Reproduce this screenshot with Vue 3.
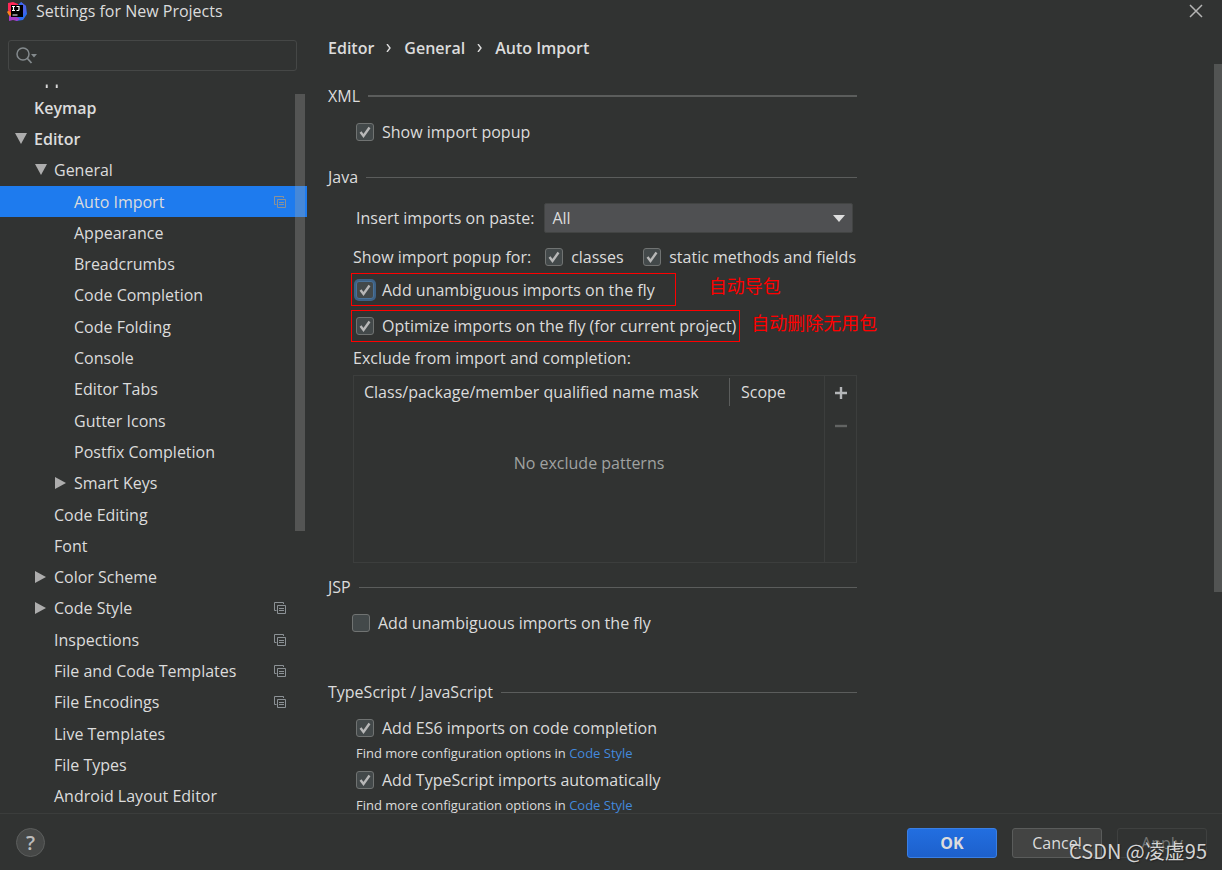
<script setup>
import { ref } from 'vue'

const tree = [
  { label: 'Keymap', level: 0, bold: true },
  { label: 'Editor', level: 0, bold: true, arrow: 'down' },
  { label: 'General', level: 1, arrow: 'down' },
  { label: 'Auto Import', level: 2, scoped: true },
  { label: 'Appearance', level: 2 },
  { label: 'Breadcrumbs', level: 2 },
  { label: 'Code Completion', level: 2 },
  { label: 'Code Folding', level: 2 },
  { label: 'Console', level: 2 },
  { label: 'Editor Tabs', level: 2 },
  { label: 'Gutter Icons', level: 2 },
  { label: 'Postfix Completion', level: 2 },
  { label: 'Smart Keys', level: 2, arrow: 'right' },
  { label: 'Code Editing', level: 1 },
  { label: 'Font', level: 1 },
  { label: 'Color Scheme', level: 1, arrow: 'right' },
  { label: 'Code Style', level: 1, arrow: 'right', scoped: true },
  { label: 'Inspections', level: 1, scoped: true },
  { label: 'File and Code Templates', level: 1, scoped: true },
  { label: 'File Encodings', level: 1, scoped: true },
  { label: 'Live Templates', level: 1 },
  { label: 'File Types', level: 1 },
  { label: 'Android Layout Editor', level: 1 }
]

const selected = ref('Auto Import')
const query = ref('')
const paste = ref('All')
const xmlPopup = ref(true)
const classes = ref(true)
const statics = ref(true)
const addOnFly = ref(true)
const optimize = ref(true)
const jspAdd = ref(false)
const es6 = ref(true)
const tsAuto = ref(true)
</script>

<template>
  <div class="window">
    <header class="titlebar">
      <svg class="logo" viewBox="0 0 20 20" aria-hidden="true">
        <path d="M0 11l3-3 3 6-3 2z" fill="#fc801d" />
        <path d="M1 2 6 1l5 2 1 3-6 8-5-5z" fill="#fe2857" />
        <path d="M11 4l3-3 5 4 1 8-4 6-7 1-2-5 6-3z" fill="#2b6cf0" />
        <path d="M2 15l4-1 7 4-3 2-4-1-4 1z" fill="#a83cc8" />
        <path d="M14 1l5 4v6l-4 4z" fill="#4b62e8" />
        <rect x="4" y="4" width="12" height="12" fill="#000" />
        <path d="M5 5.500h3M6.500 5.500v4M5 9.500h3M9.500 5.500H12v3q0 1-1 1H9.500M5.500 14h5" fill="none" stroke="#fff" stroke-width="1.200" />
      </svg>
      <span class="title">Settings for New Projects</span>
      <button class="close" aria-label="Close">
        <svg viewBox="0 0 14 14"><path d="M1 1l12 12M13 1L1 13" /></svg>
      </button>
    </header>

    <div class="body">
      <aside class="sidebar">
        <label class="search">
          <svg viewBox="0 0 22 18" aria-hidden="true">
            <circle cx="7" cy="7" r="6" fill="none" stroke="#848a8d" stroke-width="1.500" />
            <path d="M11 11l4.500 5" stroke="#848a8d" stroke-width="1.800" />
            <path d="M15 7h6l-3 3.500z" fill="#848a8d" />
          </svg>
          <input v-model="query" type="text" aria-label="Search settings" />
        </label>

        <div class="clipped"><span>Appearance &amp; Behavior</span></div>

        <ul class="tree">
          <li v-for="item in tree" :key="item.label">
            <button
              class="node"
              :class="['level' + item.level, { bold: item.bold, selected: item.label === selected }]"
              @click="selected = item.label"
            >
              <span class="arrow">
                <svg v-if="item.arrow === 'down'" viewBox="0 0 12 12"><path d="M0 0h12L6 11z" /></svg>
                <svg v-if="item.arrow === 'right'" viewBox="0 0 12 12"><path d="M0 0v12l11-6z" /></svg>
              </span>
              <span class="label">{{ item.label }}</span>
              <svg v-if="item.scoped" class="scope" viewBox="0 0 12 12">
                <path d="M2.500 8.500H.500V.500h9v1.500M3.500 11.500v-8h8v8zM5 6.500h5M5 8.500h5" />
              </svg>
            </button>
          </li>
        </ul>
        <div class="tree-thumb"></div>
      </aside>

      <main class="main">
        <nav class="crumbs">
          <a href="#editor">Editor</a>
          <svg viewBox="0 0 6 8"><path d="M1 0l3 4-3 4" /></svg>
          <a href="#general">General</a>
          <svg viewBox="0 0 6 8"><path d="M1 0l3 4-3 4" /></svg>
          <a href="#auto-import">Auto Import</a>
        </nav>

        <section class="xml">
          <h2 class="thick">XML</h2>
          <label class="option indent">
            <span class="check"><input v-model="xmlPopup" type="checkbox" /><svg viewBox="0 0 18 18"><path d="M4.500 9l3 4L13.500 4.500" /></svg></span>
            Show import popup
          </label>
        </section>

        <section class="java">
          <h2>Java</h2>
          <div class="paste">
            <label for="paste">Insert imports on paste:</label>
            <div class="select">
              <select id="paste" v-model="paste">
                <option>All</option>
                <option>Ask</option>
                <option>None</option>
              </select>
              <svg viewBox="0 0 12 7"><path d="M0 0h12L6 7z" /></svg>
            </div>
          </div>
          <div class="popup-for">
            <span class="caption">Show import popup for:</span>
            <label class="option">
              <span class="check"><input v-model="classes" type="checkbox" /><svg viewBox="0 0 18 18"><path d="M4.500 9l3 4L13.500 4.500" /></svg></span>
              classes
            </label>
            <label class="option last">
              <span class="check"><input v-model="statics" type="checkbox" /><svg viewBox="0 0 18 18"><path d="M4.500 9l3 4L13.500 4.500" /></svg></span>
              static methods and fields
            </label>
          </div>
          <div class="marked">
            <label class="option frame wide">
              <span class="check focused"><input v-model="addOnFly" type="checkbox" /><svg viewBox="0 0 18 18"><path d="M4.500 9l3 4L13.500 4.500" /></svg></span>
              Add unambiguous imports on the fly
            </label>
            <span class="note far">自动导包</span>
          </div>
          <div class="marked">
            <label class="option frame">
              <span class="check"><input v-model="optimize" type="checkbox" /><svg viewBox="0 0 18 18"><path d="M4.500 9l3 4L13.500 4.500" /></svg></span>
              Optimize imports on the fly (for current project)
            </label>
            <span class="note">自动删除无用包</span>
          </div>
          <p id="exclude" class="exclude">Exclude from import and completion:</p>
          <div class="patterns">
            <table aria-labelledby="exclude">
              <thead>
                <tr><th>Class/package/member qualified name mask</th><th class="scope-col">Scope</th></tr>
              </thead>
              <tbody>
                <tr><td colspan="2">No exclude patterns</td></tr>
              </tbody>
            </table>
            <div class="tools">
              <button aria-label="Add"><svg viewBox="0 0 14 14"><path d="M7 1v12M1 7h12" /></svg></button>
              <button aria-label="Remove" disabled><svg viewBox="0 0 14 14"><path d="M1 7h12" /></svg></button>
            </div>
          </div>
        </section>

        <section class="jsp">
          <h2>JSP</h2>
          <label class="option">
            <span class="check"><input v-model="jspAdd" type="checkbox" /><svg viewBox="0 0 18 18"><path d="M4.500 9l3 4L13.500 4.500" /></svg></span>
            Add unambiguous imports on the fly
          </label>
        </section>

        <section class="script">
          <h2>TypeScript / JavaScript</h2>
          <label class="option indent">
            <span class="check"><input v-model="es6" type="checkbox" /><svg viewBox="0 0 18 18"><path d="M4.500 9l3 4L13.500 4.500" /></svg></span>
            Add ES6 imports on code completion
          </label>
          <p class="hint">Find more configuration options in <a href="#code-style">Code Style</a></p>
          <label class="option indent">
            <span class="check"><input v-model="tsAuto" type="checkbox" /><svg viewBox="0 0 18 18"><path d="M4.500 9l3 4L13.500 4.500" /></svg></span>
            Add TypeScript imports automatically
          </label>
          <p class="hint">Find more configuration options in <a href="#code-style">Code Style</a></p>
        </section>
        <div class="main-thumb"></div>
      </main>
    </div>

    <footer class="footer">
      <button class="help" aria-label="Help">?</button>
      <div class="actions">
        <button class="btn primary">OK</button>
        <button class="btn">Cancel</button>
        <button class="btn" disabled>Apply</button>
      </div>
      <span class="watermark">CSDN @凌虚95</span>
    </footer>
  </div>
</template>

<style>
html,
body {
  background: #313332;
}
</style>

<style scoped>
.window {
  display: flex;
  flex-direction: column;
  height: 100vh;
  min-height: 640px;
  overflow: hidden;
  position: relative;
  background: #313332;
  color: #dcdcdc;
  font: 16px/24px "Open Sans", "Noto Sans", "Noto Sans CJK SC", sans-serif;
}
.window *,
.window *::before {
  box-sizing: border-box;
}
button,
input,
select {
  font: inherit;
  color: inherit;
  margin: 0;
}
button {
  padding: 0;
  border: 0;
  background: none;
}
p,
h2,
ul {
  margin: 0;
  padding: 0;
}
a {
  color: inherit;
  text-decoration: none;
}
.titlebar {
  display: flex;
  align-items: center;
  height: 24px;
  flex: none;
  padding: 0 19px 2px 7px;
}
.logo {
  width: 20px;
  height: 20px;
  margin-right: 9px;
}
.close {
  margin-left: auto;
  width: 14px;
  height: 22px;
  display: flex;
  align-items: center;
}
.close svg {
  width: 14px;
  stroke: #b4b4b4;
  stroke-width: 1.500;
}
.body {
  display: flex;
  flex: 1;
  min-height: 0;
}
.sidebar {
  width: 307px;
  flex: none;
  display: flex;
  flex-direction: column;
  padding-top: 16px;
  position: relative;
}
.search {
  display: flex;
  align-items: center;
  height: 31px;
  flex: none;
  margin: 0 10px 0 8px;
  padding-left: 7px;
  border: 1px solid #454746;
  border-radius: 3px;
}
.search svg {
  width: 22px;
  height: 18px;
}
.search input {
  flex: 1;
  min-width: 0;
  border: 0;
  outline: 0;
  background: none;
}
.clipped {
  display: flex;
  align-items: flex-end;
  height: 6px;
  flex: none;
  margin: 11px 0 4px;
  padding-left: 34px;
  overflow: hidden;
  font-weight: 600;
  line-height: 20px;
  mask-image: linear-gradient(transparent 25%, #000 60%);
}
.tree {
  flex: 1;
  min-height: 0;
  display: flex;
  flex-direction: column;
  list-style: none;
  padding-bottom: 1px;
}
.tree li {
  flex: 1;
  min-height: 24px;
  display: flex;
}
.node {
  flex: 1;
  display: flex;
  align-items: center;
  text-align: left;
  padding-right: 21px;
}
.level0 {
  padding-left: 15px;
}
.level1 {
  padding-left: 35px;
}
.level2 {
  padding-left: 55px;
}
.bold {
  font-weight: 600;
}
.selected {
  background: #1e7bee;
}
.arrow {
  width: 19px;
  flex: none;
  display: flex;
}
.arrow svg {
  width: 12px;
  height: 12px;
  fill: #adadad;
}
.label {
  flex: 1;
}
.scope {
  width: 12px;
  height: 12px;
  fill: none;
  stroke: #8c9296;
}
.tree-thumb {
  position: absolute;
  top: 70px;
  right: 2px;
  width: 10px;
  height: 437px;
  background: rgba(166, 166, 166, 0.3);
}
.main {
  flex: 1;
  min-width: 0;
  overflow: hidden;
  position: relative;
  padding-left: 21px;
}
.main-thumb {
  position: absolute;
  top: 40px;
  right: 0;
  width: 8px;
  height: 528px;
  background: #525453;
}
.crumbs {
  display: flex;
  align-items: center;
  gap: 12px;
  height: 48px;
  font-weight: 600;
}
.crumbs svg {
  width: 6px;
  height: 8px;
  fill: none;
  stroke: #dcdcdc;
  stroke-width: 1.400;
}
section {
  max-width: 529px;
}
h2 {
  display: flex;
  align-items: center;
  gap: 8px;
  height: 24px;
  font-size: 16px;
  font-weight: 400;
}
h2::after {
  content: "";
  flex: 1;
  height: 1px;
  background: #5b5d5c;
}
.thick::after {
  height: 2px;
}
.option {
  display: flex;
  align-items: center;
  gap: 8px;
  height: 24px;
  white-space: nowrap;
}
.indent {
  margin-left: 28px;
}
.check {
  position: relative;
  display: flex;
  width: 18px;
  height: 18px;
  flex: none;
}
.check input {
  appearance: none;
  width: 18px;
  height: 18px;
  border: 1px solid #707372;
  border-radius: 3px;
  background: #43494a;
}
.check svg {
  position: absolute;
  inset: 0;
  fill: none;
  stroke: #b8b8b8;
  stroke-width: 2.400;
  pointer-events: none;
  visibility: hidden;
}
.check input:checked + svg {
  visibility: visible;
}
.focused input {
  border-color: #4a7299;
  box-shadow: 0 0 0 2px #3d6185;
}
.xml {
  margin-top: 12px;
}
h2 + .option {
  margin-top: 12px;
}
.java {
  margin-top: 21px;
}
.paste {
  display: flex;
  align-items: center;
  gap: 10px;
  margin: 14px 4px 12px 28px;
}
.paste label,
.caption {
  flex: none;
}
.select {
  flex: 1;
  position: relative;
}
.select select {
  display: block;
  appearance: none;
  width: 100%;
  height: 30px;
  padding: 0 7px;
  border: 1px solid #424443;
  border-radius: 2px;
  background: #4f5052;
}
.select svg {
  position: absolute;
  top: 12px;
  right: 8px;
  width: 12px;
  height: 7px;
  fill: #dedede;
  pointer-events: none;
}
.popup-for {
  display: flex;
  align-items: center;
  gap: 14px;
  margin: 0 1px 4px 25px;
}
.last {
  margin-left: auto;
}
.marked {
  display: flex;
  margin: 0 0 4px 23px;
  white-space: nowrap;
}
.frame {
  height: 32px;
  padding: 0 3px 0 4px;
  border: 1px solid #ff0000;
}
.wide {
  height: 33px;
  padding-right: 20px;
}
.note {
  margin-left: 11px;
  color: #ff0000;
  font-family: "Noto Sans CJK SC", sans-serif;
  font-size: 18px;
}
.far {
  margin-left: 33px;
}
.exclude {
  margin-left: 25px;
}
.patterns {
  display: flex;
  height: 188px;
  margin: 5px 0 0 25px;
  border: 1px solid #3c3e3d;
}
table {
  flex: 1;
  border-collapse: collapse;
}
th {
  position: relative;
  height: 32px;
  padding: 0 10px;
  text-align: left;
  font-weight: 400;
  white-space: nowrap;
}
.scope-col {
  width: 95px;
  padding-left: 12px;
}
.scope-col::before {
  content: "";
  position: absolute;
  left: 0;
  top: 2px;
  bottom: 2px;
  width: 1px;
  background: #5b5d5c;
}
td {
  padding: 0 0 44px;
  text-align: center;
  color: #a0a2a1;
}
.tools {
  width: 32px;
  border-left: 1px solid #3c3e3d;
}
.tools button {
  display: flex;
  align-items: center;
  justify-content: center;
  width: 31px;
  height: 33px;
}
.tools svg {
  width: 14px;
  stroke: #b4b6b8;
  stroke-width: 2.400;
}
.tools button:disabled svg {
  stroke: #626463;
}
.jsp {
  margin-top: 12px;
}
.jsp .option {
  margin-left: 24px;
}
.script {
  margin-top: 45px;
}
.hint {
  margin: 3px 0 5px 28px;
  font-size: 13px;
  line-height: 20px;
}
.hint a {
  color: #4389dd;
}
.footer {
  display: flex;
  align-items: center;
  justify-content: space-between;
  height: 57px;
  flex: none;
  padding: 1px 15px 0 16px;
  border-top: 1px solid #3b3d3c;
}
.help {
  width: 29px;
  height: 29px;
  border: 1px solid #5c5e5d;
  border-radius: 50%;
  background: #464847;
  color: #bcbcbc;
  font-size: 20px;
  font-weight: 600;
}
.actions {
  display: flex;
  gap: 15px;
}
.btn {
  width: 90px;
  height: 30px;
  border: 1px solid #5a5c5b;
  border-radius: 3px;
  background: #434443;
}
.btn:disabled {
  border-color: #3f4140;
  background: none;
  color: #737574;
}
.primary {
  border-color: #3a7fe4;
  background: linear-gradient(#226ee0, #1d60cc);
  font-weight: 700;
}
.watermark {
  position: absolute;
  right: 15px;
  bottom: 5px;
  color: #d4d4d4;
  font: 20px/28px "Noto Sans CJK SC", sans-serif;
  text-shadow: 1px 1px 1px #222;
}
</style>
